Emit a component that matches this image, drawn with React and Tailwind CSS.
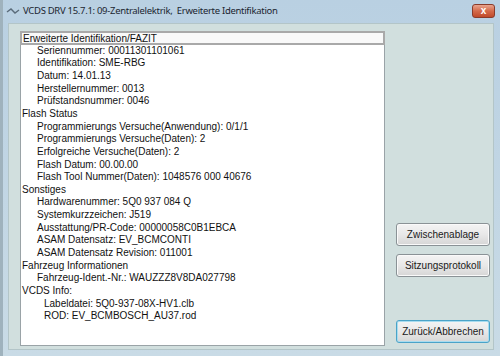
import React from 'react';

const lines = [
  { t: 'Erweiterte Identifikation/FAZIT', l: 0, sel: true },
  { t: 'Seriennummer: 00011301101061', l: 1 },
  { t: 'Identifikation: SME-RBG', l: 1 },
  { t: 'Datum: 14.01.13', l: 1 },
  { t: 'Herstellernummer: 0013', l: 1 },
  { t: 'Prüfstandsnummer: 0046', l: 1 },
  { t: 'Flash Status', l: 0 },
  { t: 'Programmierungs Versuche(Anwendung): 0/1/1', l: 1 },
  { t: 'Programmierungs Versuche(Daten): 2', l: 1 },
  { t: 'Erfolgreiche Versuche(Daten): 2', l: 1 },
  { t: 'Flash Datum: 00.00.00', l: 1 },
  { t: 'Flash Tool Nummer(Daten): 1048576 000 40676', l: 1 },
  { t: 'Sonstiges', l: 0 },
  { t: 'Hardwarenummer: 5Q0 937 084 Q', l: 1 },
  { t: 'Systemkurzzeichen: J519', l: 1 },
  { t: 'Ausstattung/PR-Code: 00000058C0B1EBCA', l: 1 },
  { t: 'ASAM Datensatz: EV_BCMCONTI', l: 1 },
  { t: 'ASAM Datensatz Revision: 011001', l: 1 },
  { t: 'Fahrzeug Informationen', l: 0 },
  { t: 'Fahrzeug-Ident.-Nr.: WAUZZZ8V8DA027798', l: 1 },
  { t: 'VCDS Info:', l: 0 },
  { t: 'Labeldatei: 5Q0-937-08X-HV1.clb', l: 2 },
  { t: 'ROD: EV_BCMBOSCH_AU37.rod', l: 2 },
];

function WinButton({ children, active }) {
  return (
    <button
      className={`w-[94px] h-[23px] rounded-[3px] border text-[10px] text-[#1a1a1a] font-['Liberation_Sans',Arial,sans-serif] bg-gradient-to-b from-[#f4f4f4] via-[#e8e8e8] to-[#d6d6d6] ${
        active ? 'border-[#4aa3c8] shadow-[inset_0_0_0_1px_#a8dcef]' : 'border-[#8a9296] shadow-[inset_0_0_0_1px_#fafafa]'
      }`}
    >
      {children}
    </button>
  );
}

export default function App() {
  return (
    <div className="w-[500px] h-[356px] overflow-hidden bg-gradient-to-b from-[#b9d0e2] to-[#c9dbe6] border-l-[3px] border-[#9fb2bd] flex flex-col">
      {/* Titelleiste */}
      <div className="h-[23px] flex items-center pl-[3px] pr-[5px] shrink-0">
        <svg width="14" height="10" viewBox="0 0 14 10" className="mr-[3px]">
          <path d="M1 5 L5 2 L9 6 L13 3" stroke="#5a6b7a" strokeWidth="1.4" fill="none" />
        </svg>
        <span className="text-[9.5px] text-[#1b2530] font-['Noto_Sans','Open_Sans',sans-serif] tracking-[-0.3px] whitespace-pre">
          VCDS DRV 15.7.1: 09-Zentralelektrik,  Erweiterte Identifikation
        </span>
        <div className="ml-auto w-[23px] h-[14px] rounded-[3px] border border-[#8a3b2a] bg-gradient-to-b from-[#e8a48e] via-[#d46a4a] to-[#c04a2a] flex items-center justify-center mt-[-2px]">
          <span className="text-white text-[10px] font-bold leading-none font-['Liberation_Sans',sans-serif]">x</span>
        </div>
      </div>

      {/* Fensterinhalt */}
      <div className="flex-1 ml-[5px] mr-[6px] mb-[6px] bg-[#d1dfde] border border-[#b3c5c8] flex pt-[7px] pl-[11px]">
        <div className="w-[365px] h-[315px] bg-white border border-[#9aa3a7] font-['Liberation_Sans',Arial,sans-serif] text-[10px] text-[#111] leading-[12.65px]">
          {lines.map((ln, i) => (
            <div
              key={i}
              className={`whitespace-pre ${
                ln.l === 0 ? 'pl-[1px]' : ln.l === 1 ? 'pl-[16px]' : 'pl-[23px]'
              } ${ln.sel ? 'border-2 border-[#a9a9a9] bg-[#f9f9f9] h-[14px] leading-[11px] -mx-px -mt-px mb-[-0.4px]' : ''}`}
            >
              {ln.t}
            </div>
          ))}
        </div>
        <div className="flex flex-col ml-[11px] pt-[192px] w-[94px]">
          <WinButton>Zwischenablage</WinButton>
          <div className="h-[8px]" />
          <WinButton>Sitzungsprotokoll</WinButton>
          <div className="h-[43px]" />
          <WinButton active>Zurück/Abbrechen</WinButton>
        </div>
      </div>
    </div>
  );
}
